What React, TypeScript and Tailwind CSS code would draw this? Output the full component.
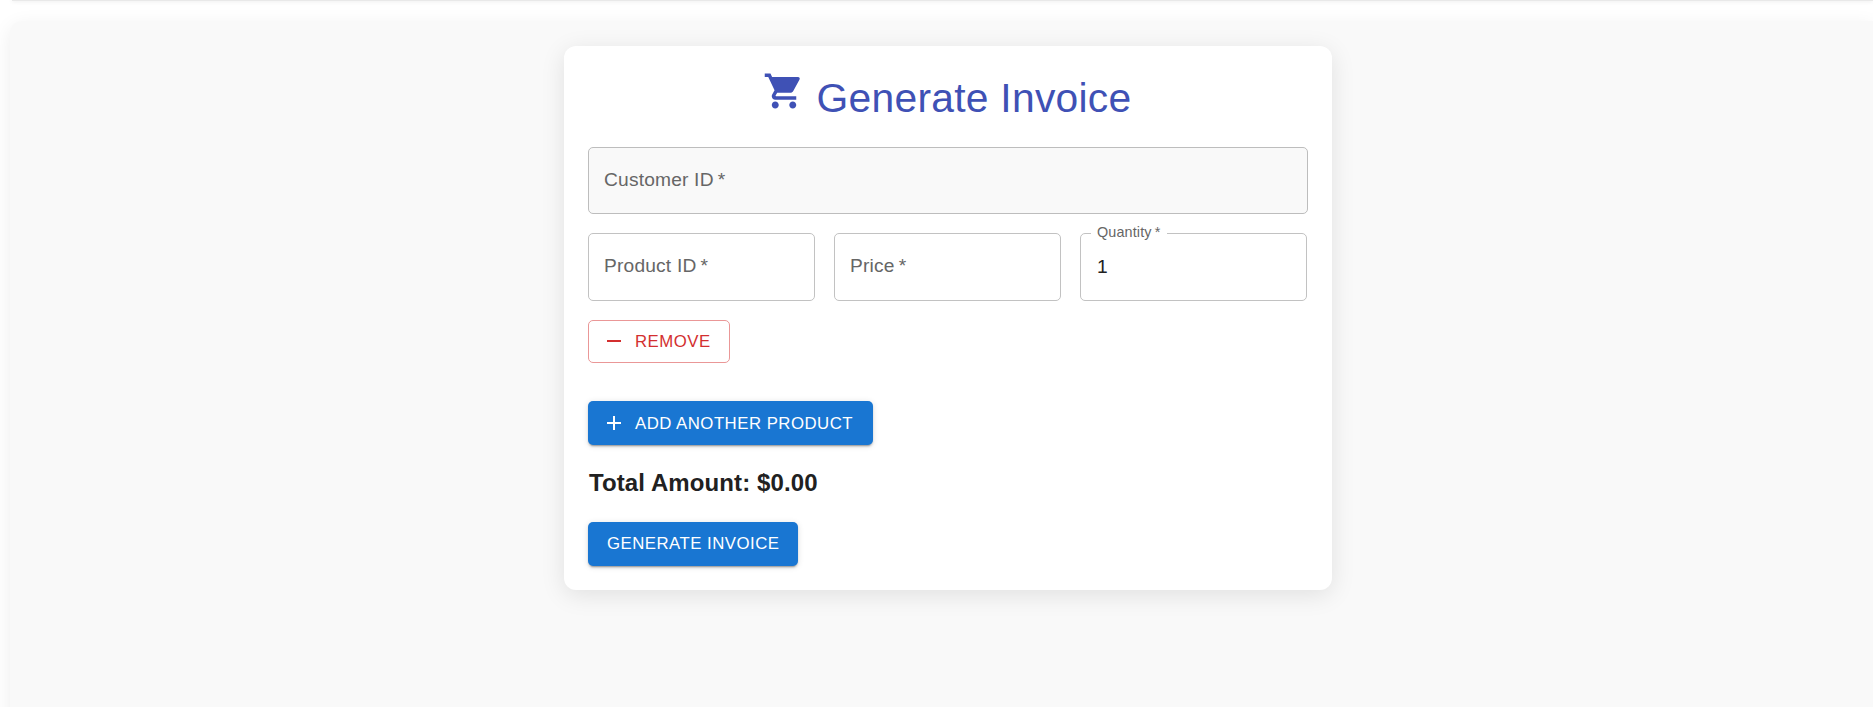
import React from "react";
import { MdAdd, MdRemove, MdShoppingCart } from "react-icons/md";

const contained =
  "flex h-[44px] items-center rounded-[5px] bg-[#1976d2] px-[19px] text-[16.8px] tracking-[0.48px] text-white uppercase whitespace-nowrap shadow-[0_3px_1px_-2px_rgba(0,0,0,0.2),0_2px_2px_0_rgba(0,0,0,0.14),0_1px_6px_0_rgba(0,0,0,0.12)]";

function Field({ label, filled }: { label: string; filled?: boolean }) {
  return (
    <div
      className={
        filled
          ? "flex h-[67px] items-center rounded-[5px] border border-[#bdbdbd] bg-[#f9f9f9] px-[15px] pb-px"
          : "flex h-[68px] w-[227px] items-center rounded-[5px] border border-[#c2c2c2] px-[15px] pb-[3px]"
      }
    >
      <span className="text-[19.2px] leading-[27.6px] tracking-[0.18px] whitespace-pre text-[#666666]">{label}{"\u2009*"}</span>
    </div>
  );
}

export default function App() {
  return (
    <div className="h-[707px] overflow-hidden bg-white font-['Liberation_Sans',Arial,sans-serif]">
      <div className="ml-[12px] h-px bg-[#e9e9e9] shadow-[0_0_4px_rgba(0,0,0,0.2)]" />
      <main className="mt-[20px] ml-[10px] flex h-[720px] items-start rounded-tl-[12px] bg-[#f9f9f9] pl-[554px] pt-[25px] shadow-[0_5px_20px_rgba(0,0,0,0.075)]">
        <section className="h-[544px] w-[768px] shrink-0 rounded-[12px] bg-white p-6 shadow-[0_5px_24px_rgba(0,0,0,0.1)]">
          <h1 className="flex h-[50px] items-start justify-center pr-[2px] text-[40.8px] leading-[50.4px] tracking-[0.26px] whitespace-nowrap text-[#3f51b5]">
            <MdShoppingCart className="mr-3 size-[42px]" />
            <span className="pt-[3px]">Generate Invoice</span>
          </h1>
          <div className="mt-[27px]">
            <Field label="Customer ID" filled />
          </div>
          <div className="mt-[19px] flex gap-[19px]">
            <Field label="Product ID" />
            <Field label="Price" />
            <div className="relative flex h-[68px] w-[227px] items-center rounded-[5px] border border-[#c2c2c2] px-4">
              <span className="absolute -top-[11px] left-[10px] bg-white pr-[7px] pl-[6px] text-[14.4px] leading-[18px] tracking-[0.13px] whitespace-pre text-[#666666]">{"Quantity\u2009*"}</span>
              <span className="text-[19.2px] leading-[27.6px] text-[#212121]">1</span>
            </div>
          </div>
          <button className="mt-[19px] flex h-[43px] w-[142px] items-center rounded-[5px] border border-[#ea9797] pl-[13px] text-[16.8px] tracking-[0.48px] text-[#d32f2f] uppercase">
            <MdRemove className="mr-[9px] mb-px size-6" />
            Remove
          </button>
          <button className={contained + " mt-[38px] w-[285px] !pl-[14px]"}>
            <MdAdd className="mr-[9px] size-6 shrink-0" />
            <span className="pt-px">Add Another Product</span>
          </button>
          <h2 className="mt-[19px] pl-px text-[24px] leading-[38px] font-bold tracking-[0.1px] text-[#212121]">Total Amount: $0.00</h2>
          <button className={contained + " mt-5 w-[210px]"}>Generate Invoice</button>
        </section>
      </main>
    </div>
  );
}
